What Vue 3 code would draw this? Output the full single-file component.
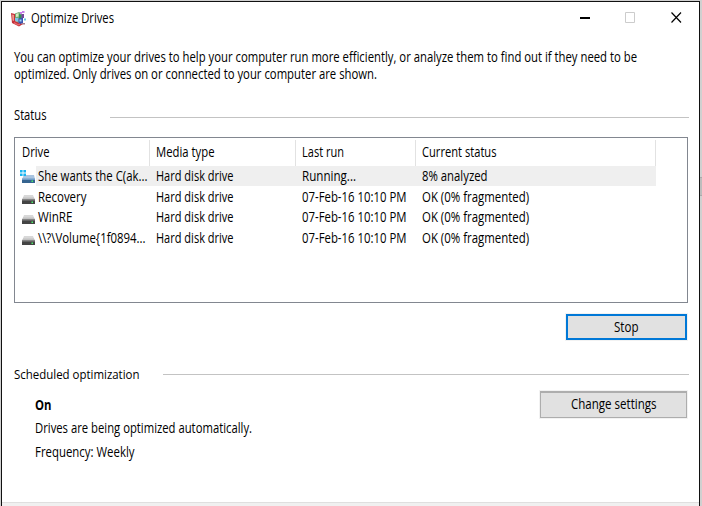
<script setup>
import { h } from 'vue'

// A single line of text set to a fixed advance width.
const Line = (props) =>
  h('svg', { class: 'line', width: props.w, height: 17 }, [
    h('text', { x: 0, y: 13, textLength: props.w, lengthAdjust: 'spacingAndGlyphs' }, props.t),
  ])
Line.props = ['t', 'w']

const columns = [
  { t: 'Drive', w: 27.5 },
  { t: 'Media type', w: 58.5 },
  { t: 'Last run', w: 42 },
  { t: 'Current status', w: 74.5 },
]
const drives = [
  { name: 'She wants the C(ak...', w: 109.5, run: 'Running...', rw: 54, status: '8% analyzed', sw: 65.5, system: true },
  { name: 'Recovery', w: 48.5, run: '07-Feb-16 10:10 PM', rw: 104.5, status: 'OK (0% fragmented)', sw: 107 },
  { name: 'WinRE', w: 34.5, run: '07-Feb-16 10:10 PM', rw: 104.5, status: 'OK (0% fragmented)', sw: 107 },
  { name: '\\\\?\\Volume{1f0894...', w: 107.5, run: '07-Feb-16 10:10 PM', rw: 104.5, status: 'OK (0% fragmented)', sw: 107 },
]
</script>

<template>
  <div class="desktop">
    <main class="window">
      <header class="titlebar">
        <svg class="app-icon" width="16" height="17" viewBox="0 0 16 17">
          <path d="M0 3l4 1v7l8 3-4 2.500-7-3.500z" fill="#c4303a" />
          <path d="M1 4.500l2 .5v6l-1.500-.5z" fill="#f0948a" />
          <path d="M4 3.500l4-1.500 3 1.500v8l-4 1-3-2z" fill="#76a877" />
          <path d="M5 4l2.500-1v3.500L5 7z" fill="#d9ecc4" />
          <path d="M8 4l2.500 1v4L8 8.500z" fill="#2f9455" />
          <path d="M4 8h3.500v4L4 10.500z" fill="#7fc4ea" />
          <path d="M7.500 8.500l4.500-1V13l-3 1-1.500-1z" fill="#3a55b0" />
          <path d="M8.500 9.500h2v2h-2z" fill="#9fd2f4" />
          <path d="M3 12l4 2 2-.5V15l-2 .5-4-2z" fill="#e2656a" />
          <path d="M9 2h2v2H9zM11 1h2.500v2H11z" fill="#c880ea" />
          <path d="M10.500 4h2.500v4h-2.500z" fill="#74479c" />
          <path d="M13 8.500h2v2h-2z" fill="#67cbe2" />
          <path d="M11 13h3v1.500h-3z" fill="#a8808e" />
        </svg>
        <Line class="title" t="Optimize Drives" :w="83" />
        <svg class="controls" width="102" height="11" viewBox="0 0 102 11">
          <path d="M0 5h10v2H0z" fill="#000" />
          <path d="M45.500 .5h9v10h-9z" fill="none" stroke="#ccc" />
          <path d="M91.500 .5l9.500 10M101 .5l-9.500 10" fill="none" stroke="#000" stroke-width="1.200" />
        </svg>
      </header>

      <section class="intro">
        <Line t="You can optimize your drives to help your computer run more efficiently, or analyze them to find out if they need to be" :w="623" />
        <Line t="optimized. Only drives on or connected to your computer are shown." :w="363" />
      </section>

      <div class="heading status-heading"><Line t="Status" :w="32.500" /><i class="rule"></i></div>

      <section class="list">
        <div class="grid head">
          <span v-for="c in columns" :key="c.t" class="cell"><Line :t="c.t" :w="c.w" /></span>
        </div>
        <div v-for="(d, i) in drives" :key="i" class="grid row" :class="{ selected: d.system }">
          <span class="drive">
            <svg class="disk" width="15" height="14" viewBox="0 0 15 14">
              <template v-if="d.system">
                <path d="M3 5h10l1 4H1z" fill="#a9c4e0" />
                <path d="M1 9h13v4H1z" fill="#35648f" />
                <path d="M1 8.500h13V10H1z" fill="#6f9cc6" />
                <path d="M-1 0h2.600v2.600H-1zM2.400 0H5v2.600H2.400zM-1 3.400h2.600V6H-1zM2.400 3.400H5V6H2.400z" fill="#18b4f1" />
              </template>
              <template v-else>
                <path d="M3 4h9l2 5H1z" fill="#d8d8d8" />
                <path d="M2 6.500h11l1 2.500H1z" fill="#c2c2c2" />
                <path d="M1 8.500h13V13H1z" fill="#444" />
                <path d="M1 8.500h13v1H1z" fill="#858585" />
              </template>
              <path d="M10.500 10.500h1.500V12h-1.500z" fill="#4bea68" />
            </svg>
            <span class="name"><Line :t="d.name" :w="d.w" /></span>
          </span>
          <span class="cell"><Line t="Hard disk drive" :w="77.500" /></span>
          <span class="cell"><Line :t="d.run" :w="d.rw" /></span>
          <span class="cell"><Line :t="d.status" :w="d.sw" /></span>
        </div>
      </section>

      <div class="actions"><button class="stop"><Line t="Stop" :w="24.500" /></button></div>

      <div class="heading schedule-heading"><Line t="Scheduled optimization" :w="125.500" /><i class="rule"></i></div>

      <section class="schedule">
        <div class="details">
          <Line class="bold" t="On" :w="16.500" />
          <Line t="Drives are being optimized automatically." :w="217" />
          <Line t="Frequency: Weekly" :w="99.500" />
        </div>
        <button class="change"><Line t="Change settings" :w="85.500" /></button>
      </section>
      <footer></footer>
    </main>
    <aside class="edge"><i></i></aside>
  </div>
</template>

<style>
body { overflow: hidden; }
</style>

<style scoped>
.desktop {
  box-sizing: border-box;
  width: 702px;
  height: 506px;
  padding: 1px 0 0 1px;
  display: flex;
  background: #d0d0d0;
  font: 13.600px "Open Sans", "Noto Sans", sans-serif;
}
.window {
  box-sizing: border-box;
  width: 699px;
  height: 505px;
  display: flex;
  flex-direction: column;
  border: 1px solid #111;
  border-bottom: 0;
  background: #fff;
}
.edge { width: 2px; padding-top: 176px; }
.edge i { display: block; height: 17px; border: solid #aaa; border-width: 1px 0; background: #bdbdbd; }
.line { display: block; flex: none; overflow: visible; fill: #000; }
.titlebar { height: 32px; display: flex; align-items: flex-start; padding-left: 9px; }
.app-icon { margin-top: 8px; }
.title { margin: 8px 0 0 4px; }
.controls { margin: 10px 17px 0 auto; }
.intro { height: 73px; box-sizing: border-box; padding: 15px 0 0 12.300px; }
.heading { display: flex; height: 17px; padding: 0 10px 0 12px; }
.rule { flex: 1; height: 1px; background: #c3c3c3; }
.status-heading .rule { margin: 10px 0 0 63.500px; }
.schedule-heading { font-size: 12.800px; }
.schedule-heading .rule { margin: 8px 0 0 23.500px; }
.list {
  box-sizing: border-box;
  width: 674px;
  height: 166px;
  margin: 13px 0 0 12px;
  border: 1px solid #828790;
}
.grid { display: grid; width: 641px; grid-template-columns: 135px 146px 120px 240px; }
.head { height: 26px; margin: 2px 0 0; }
.head .cell { border-right: 1px solid #e2e2e2; padding-top: 4px; }
.head .cell:first-child { padding-left: 7px; }
.cell { padding-left: 6px; }
.row { height: 20.670px; }
.row .cell, .name { box-sizing: border-box; height: 19px; padding-top: 2px; }
.selected .cell, .selected .name { height: 20px; background: #efefef; }
.drive { display: flex; padding-left: 6px; }
.disk { margin-top: 4px; flex: none; overflow: visible; }
.name { flex: 1; padding-left: 2px; }
.actions { height: 63px; box-sizing: border-box; padding: 11px 12px 0 0; display: flex; justify-content: flex-end; }
button {
  box-sizing: border-box;
  display: flex;
  justify-content: center;
  padding: 0;
  font: inherit;
  background: #e1e1e1;
  box-shadow: 0 0 0 1px #f2f2f2;
}
.stop { width: 121px; height: 26px; border: 2px solid #0078d7; padding-top: 3px; }
.change { width: 147px; height: 27px; margin-top: 8px; border: 1px solid #adadad; border-top-width: 2px; padding-top: 3px; }
.schedule { flex: 1; display: flex; justify-content: space-between; align-items: flex-start; padding: 0 12px 0 32.500px; }
.details { padding-top: 13.500px; display: flex; flex-direction: column; gap: 6.500px; }
.bold { font-weight: 700; }
footer { height: 3px; border-top: 1px solid #dfdfdf; background: #f0f0f0; }
</style>
